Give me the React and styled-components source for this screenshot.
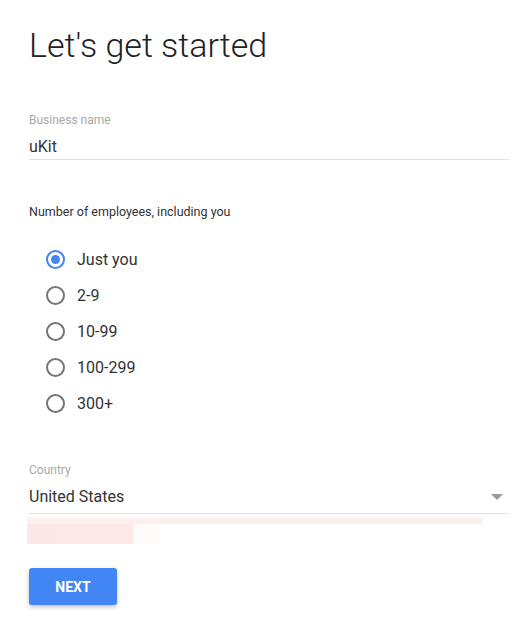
import React, { useState } from "react";
import styled, { createGlobalStyle } from "styled-components";

const GlobalStyle = createGlobalStyle`
  body {
    margin: 0;
    background: #fff;
    font-family: Roboto, "Noto Sans", sans-serif;
    color: #212121;
  }
`;

const options = ["Just you", "2-9", "10-99", "100-299", "300+"];

const App = () => {
  const [selected, setSelected] = useState(0);
  return (
    <Page>
      <GlobalStyle />
      <Title>Let's get started</Title>
      <Field gap="47px" bottom="1px">
        <Label>Business name</Label>
        <Value>uKit</Value>
      </Field>
      <Question>Number of employees, including you</Question>
      <RadioList>
        {options.map((opt, i) => (
          <RadioRow key={opt} onClick={() => setSelected(i)}>
            <Circle checked={selected === i} />
            <span>{opt}</span>
          </RadioRow>
        ))}
      </RadioList>
      <Field gap="56px" bottom="5px">
        <Label>Country</Label>
        <Value>
          United States
          <Arrow />
        </Value>
      </Field>
      <Blurred>
        <BlurLine width="456px" height="6px" />
        <BlurLine width="133px" height="20px" strong />
      </Blurred>
      <NextButton>NEXT</NextButton>
    </Page>
  );
};

const Page = styled.div`
  padding: 25px 13px 28px 29px;
  display: flex;
  flex-direction: column;
`;

const Title = styled.h1`
  margin: 0;
  font-size: 34px;
  font-weight: 300;
  color: #222;
  line-height: 40px;
`;

const Field = styled.div`
  margin-top: ${(p) => p.gap};
  border-bottom: 1px solid #e2e2e2;
  padding-bottom: ${(p) => p.bottom};
`;

const Label = styled.div`
  font-size: 12px;
  color: #a8a8a8;
  line-height: 16px;
`;

const Value = styled.div`
  font-size: 16px;
  color: #333;
  line-height: 22px;
  margin-top: 8px;
  display: flex;
  align-items: center;
  justify-content: space-between;
`;

const Arrow = styled.span`
  width: 0;
  height: 0;
  border-left: 6px solid transparent;
  border-right: 6px solid transparent;
  border-top: 6px solid #9a9a9a;
  margin-right: 6px;
`;

const Question = styled.div`
  margin-top: 44px;
  font-size: 12.5px;
  color: #333;
  line-height: 16px;
`;

const RadioList = styled.div`
  margin-top: 28px;
  padding-left: 17px;
  display: flex;
  flex-direction: column;
  gap: 14px;
  margin-bottom: -8px;
`;

const RadioRow = styled.label`
  display: flex;
  align-items: center;
  gap: 12px;
  font-size: 16px;
  color: #333;
  height: 22px;
  cursor: pointer;
`;

const Circle = styled.span`
  box-sizing: border-box;
  width: 19px;
  height: 19px;
  border-radius: 50%;
  border: 2px solid ${(p) => (p.checked ? "#4285f4" : "#757575")};
  display: flex;
  align-items: center;
  justify-content: center;
  &::after {
    content: "";
    width: 9px;
    height: 9px;
    border-radius: 50%;
    background: ${(p) => (p.checked ? "#4285f4" : "transparent")};
  }
`;

const Blurred = styled.div`
  margin-top: 4px;
  margin-left: -2px;
  display: flex;
  flex-direction: column;
`;

const BlurLine = styled.div`
  width: ${(p) => p.width};
  height: ${(p) => p.height};
  background: ${(p) =>
    p.strong
      ? "linear-gradient(90deg, #fbe7e6 0%, #fbe9e8 80%, #fefafa 80%)"
      : "#fcf0ef"};
`;

const NextButton = styled.button`
  margin-top: 24px;
  width: 88px;
  height: 37px;
  border: none;
  border-radius: 3px;
  background: #4285f4;
  color: #fff;
  font-family: Roboto, sans-serif;
  font-weight: 700;
  font-size: 14px;
  box-shadow: 0 2px 4px rgba(0, 0, 0, 0.25);
  cursor: pointer;
`;

export default App;
